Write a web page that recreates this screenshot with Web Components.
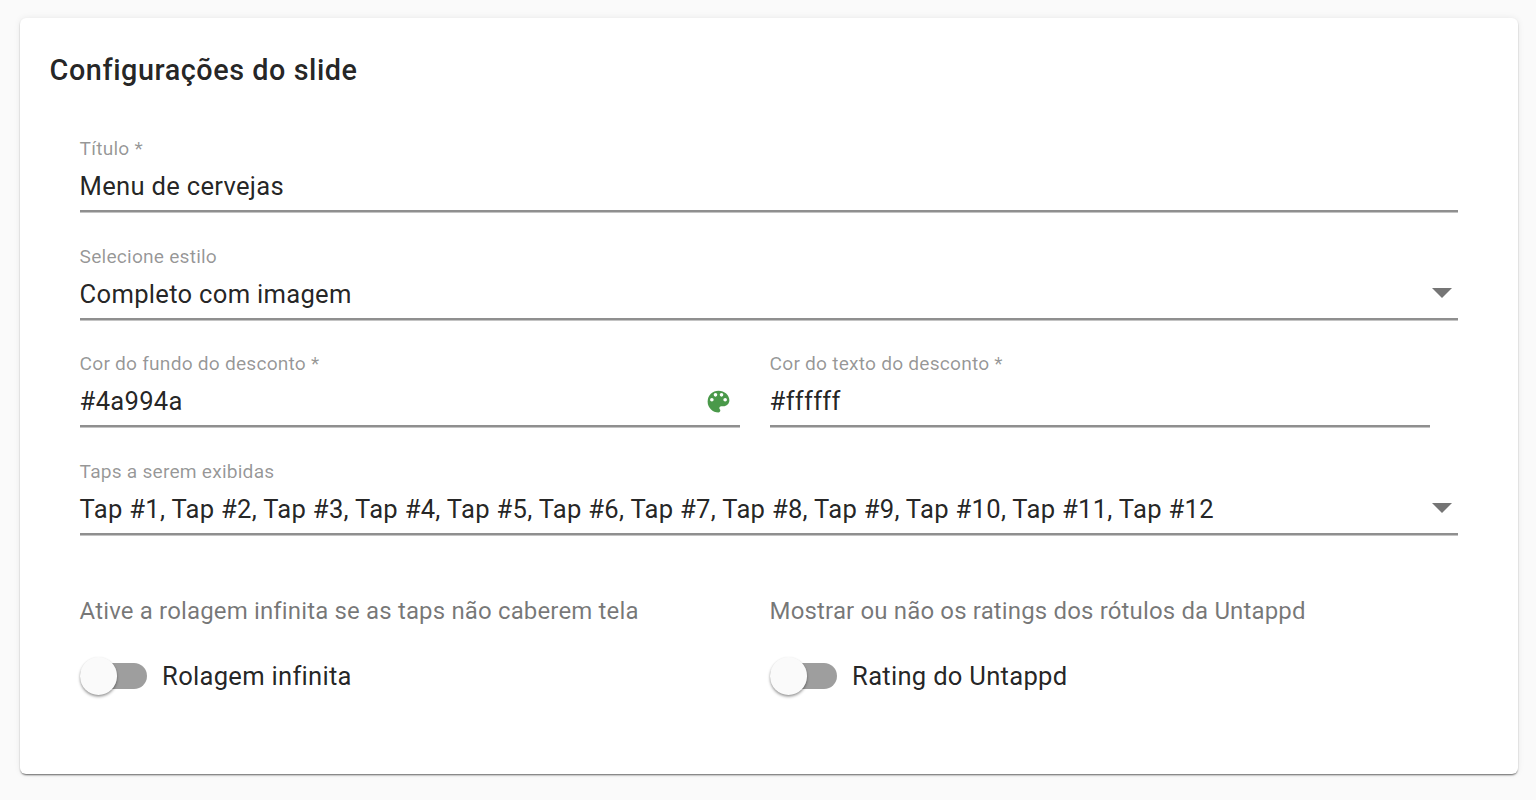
<!DOCTYPE html>
<html lang="pt"><head><meta charset="utf-8"><title>Configurações do slide</title>
<style>
html,body{margin:0;padding:0;background:#fafafa;height:800px;overflow:hidden;font-family:Roboto,"Liberation Sans",sans-serif}
svg{display:block}
</style></head><body>
<slide-card heading="Configurações do slide">
  <text-field label="Título *" value="Menu de cervejas"></text-field>
  <text-field label="Selecione estilo" value="Completo com imagem" select></text-field>
  <field-row>
    <text-field label="Cor do fundo do desconto *" value="#4a994a" palette></text-field>
    <text-field label="Cor do texto do desconto *" value="#ffffff"></text-field>
  </field-row>
  <text-field label="Taps a serem exibidas" value="Tap #1, Tap #2, Tap #3, Tap #4, Tap #5, Tap #6, Tap #7, Tap #8, Tap #9, Tap #10, Tap #11, Tap #12" select></text-field>
  <field-row toggles>
    <toggle-field hint="Ative a rolagem infinita se as taps não caberem tela" label="Rolagem infinita"></toggle-field>
    <toggle-field hint="Mostrar ou não os ratings dos rótulos da Untappd" label="Rating do Untappd"></toggle-field>
  </field-row>
</slide-card>
<script>
function define(name, css, render){
  customElements.define(name, class extends HTMLElement{
    connectedCallback(){
      if(this.shadowRoot) return;
      this.attachShadow({mode:'open'}).innerHTML='<style>'+css+'</style>'+render(this);
    }
  });
}
const attr=(el,n)=>(el.getAttribute(n)||'');
define('slide-card',`
  :host{display:block;box-sizing:border-box;margin:18px 18px 0 20px;height:756px;background:#fff;border-radius:6px;
    box-shadow:0 2px 2px -1px rgba(0,0,0,.5),0 1px 2px rgba(0,0,0,.14),0 0 7px rgba(0,0,0,.07);padding:33px 30px 0 29.6px;color:rgba(0,0,0,.87)}
  h2{margin:0;font-size:28.8px;font-weight:500;line-height:38px;letter-spacing:.55px}
  .body{padding:47px 30.4px 0 30px;display:flex;flex-direction:column}
`,el=>`<h2>${attr(el,'heading')}</h2><div class="body"><slot></slot></div>`);
define('text-field',`
  :host{display:block;box-sizing:border-box;height:107.6px}
  .label{font-size:19.2px;line-height:28px;height:28px;letter-spacing:.2px;color:rgba(0,0,0,.42);margin-top:-1px}
  .line{box-sizing:border-box;height:49px;padding-bottom:1px;display:flex;align-items:center;justify-content:space-between;border-bottom:2px solid #8f8f8f;box-shadow:0 1px 0 #c4c4c4;font-size:25.6px;letter-spacing:.285px;white-space:nowrap}
  .arrow{width:0;height:0;border-left:10px solid transparent;border-right:10px solid transparent;border-top:10px solid #757575;margin-right:6px;margin-top:-1px}
  svg{width:29px;height:29px;margin-right:6.5px;margin-top:1px}
`,el=>`<div class="label">${attr(el,'label')}</div><div class="line"><span>${attr(el,'value')}</span>${
  el.hasAttribute('select')?'<i class="arrow"></i>':''}${
  el.hasAttribute('palette')?'<svg viewBox="0 0 24 24"><path fill="#4a994a" d="M12 3a9 9 0 0 0 0 18c.83 0 1.5-.67 1.5-1.5 0-.39-.15-.74-.39-1.01-.23-.26-.38-.61-.38-.99 0-.83.67-1.5 1.5-1.5H16c2.76 0 5-2.24 5-5 0-4.42-4.03-8-9-8zm-5.5 9a1.5 1.5 0 1 1 0-3 1.5 1.5 0 0 1 0 3zm3-4a1.5 1.5 0 1 1 0-3 1.5 1.5 0 0 1 0 3zm5 0a1.5 1.5 0 1 1 0-3 1.5 1.5 0 0 1 0 3zm3 4a1.5 1.5 0 1 1 0-3 1.5 1.5 0 0 1 0 3z"/></svg>':''}</div>`);
define('field-row',`
  :host{display:grid;grid-template-columns:660px 660px;column-gap:30px}
  :host([toggles]){padding-top:29px}
`,()=>`<slot></slot>`);
define('toggle-field',`
  :host{display:block;min-width:0}
  .hint{font-size:24px;line-height:32px;letter-spacing:.15px;color:rgba(0,0,0,.54)}
  .row{display:flex;align-items:center;margin-top:29px;height:40px;font-size:25.6px;letter-spacing:.27px}
  .sw{position:relative;width:67.5px;height:26px;margin-right:15px;background:#9e9e9e;border-radius:13px;flex:none}
  .sw::before{content:"";position:absolute;left:0;top:-6px;width:37.5px;height:37.5px;border-radius:50%;background:#fafafa;
    box-shadow:0 2px 3px rgba(0,0,0,.3),0 1px 2px rgba(0,0,0,.15)}
`,el=>`<div class="hint">${attr(el,'hint')}</div><div class="row"><span class="sw"></span><span>${attr(el,'label')}</span></div>`);
</script>
</body></html>
